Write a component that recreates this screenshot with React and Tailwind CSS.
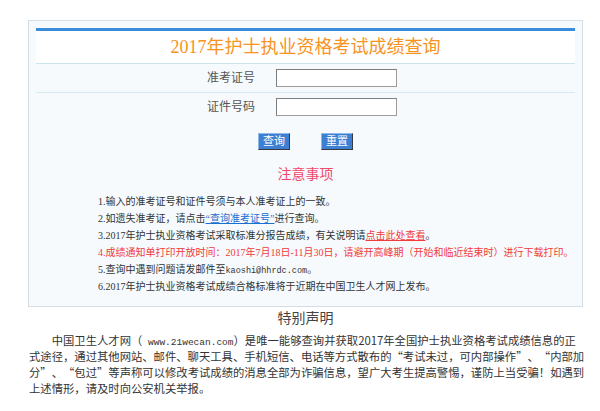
import React from "react";

const serif = { fontFamily: '"Liberation Serif", "Noto Sans CJK SC", serif' };

// full-width curly quotes, as SimSun draws them
const Lq = () => <span className="inline-block w-[1em] indent-0 text-right">“</span>;
const Rq = () => <span className="inline-block w-[1em] indent-0 text-left">”</span>;

const notes = [
  { id: 1, body: <>1.输入的准考证号和证件号须与本人准考证上的一致。</> },
  {
    id: 2,
    body: (
      <>
        2.如遗失准考证，请点击
        <a className="text-[#1a6fd0] underline" href="#">
          “查询准考证号”
        </a>
        进行查询。
      </>
    ),
  },
  {
    id: 3,
    body: (
      <>
        3.2017年护士执业资格考试采取标准分报告成绩，有关说明请
        <a className="text-[#f23b3b] underline" href="#">
          点击此处查看
        </a>
        。
      </>
    ),
  },
  {
    id: 4,
    red: true,
    body: <>4.成绩通知单打印开放时间：2017年7月18日-11月30日，请避开高峰期（开始和临近结束时）进行下载打印。</>,
  },
  {
    id: 5,
    body: (
      <>
        5.查询中遇到问题请发邮件至
        <span className="font-['Liberation_Mono',monospace] text-[8.5px] leading-none">kaoshi@hhrdc.com</span>。
      </>
    ),
  },
  { id: 6, body: <>6.2017年护士执业资格考试成绩合格标准将于近期在中国卫生人才网上发布。</> },
];

export default function App() {
  return (
    <div className="w-[600px] h-[411px] bg-white overflow-hidden" style={serif} lang="zh-CN">
      {/* Query box */}
      <div className="ml-[28px] mt-[20px] w-[555px] border border-[#d3dee6] bg-[#f6fafc] px-[7px] pt-[7px] pb-[11px]">
        <div className="h-[3px] bg-[#3a8bdb]"></div>
        <div className="h-[33px] bg-white border-b border-[#cbe4ee] flex items-center justify-center text-[18px] text-[#f7931e]">
          2017年护士执业资格考试成绩查询
        </div>

        <div className="h-[29px] border-b border-[#d6e9f0] flex items-center">
          <label className="w-[219px] text-right text-[12px] text-[#555]">准考证号</label>
          <input className="ml-[21px] w-[121px] h-[18px] bg-white border border-[#9c9c9c] border-t-[#7d7d7d] border-l-[#7d7d7d] outline-none" />
        </div>
        <div className="h-[28px] flex items-center">
          <label className="w-[219px] text-right text-[12px] text-[#555]">证件号码</label>
          <input className="ml-[21px] w-[121px] h-[18px] bg-white border border-[#9c9c9c] border-t-[#7d7d7d] border-l-[#7d7d7d] outline-none" />
        </div>

        <div className="mt-[12px] flex justify-center gap-[31px]">
          <button className="w-[32px] h-[17px] bg-[#3d7fd2] border border-[#8fb9ea] border-r-[#3a3a3a] border-b-[#3a3a3a] text-white text-[11px] leading-none">
            查询
          </button>
          <button className="w-[32px] h-[17px] bg-[#3d7fd2] border border-[#8fb9ea] border-r-[#3a3a3a] border-b-[#3a3a3a] text-white text-[11px] leading-none">
            重置
          </button>
        </div>

        <div className="mt-[17px] text-center text-[14px] leading-[16px] text-[#f2486a]">注意事项</div>

        <ul className="mt-[10px] pl-[62px] text-[10px] leading-[17px] text-[#333]">
          {notes.map((n) => (
            <li key={n.id} className={n.red ? "text-[#f23b3b]" : ""}>
              {n.body}
            </li>
          ))}
        </ul>
      </div>

      {/* Statement */}
      <div className="mt-[3px] w-[555px] ml-[28px] text-center text-[14px] leading-[18px] text-[#444]">特别声明</div>
      <p className="mt-[4px] ml-[29px] w-[558px] indent-[2em] text-[11.33px] leading-[16px] text-[#333] font-['Noto_Sans_CJK_SC',sans-serif]">
        中国卫生人才网（
        <span className="font-['Liberation_Mono',monospace] text-[9.5px] leading-none"> www.21wecan.com</span>
        ）是唯一能够查询并获取2017年全国护士执业资格考试成绩信息的正式途径，通过其他网站、邮件、聊天工具、手机短信、电话等方式散布的<Lq />考试未过，可内部操作<Rq />、<Lq />内部加分<Rq />、<Lq />包过<Rq />等声称可以修改考试成绩的消息全部为诈骗信息，望广大考生提高警惕，谨防上当受骗！如遇到上述情形，请及时向公安机关举报。
      </p>
    </div>
  );
}
